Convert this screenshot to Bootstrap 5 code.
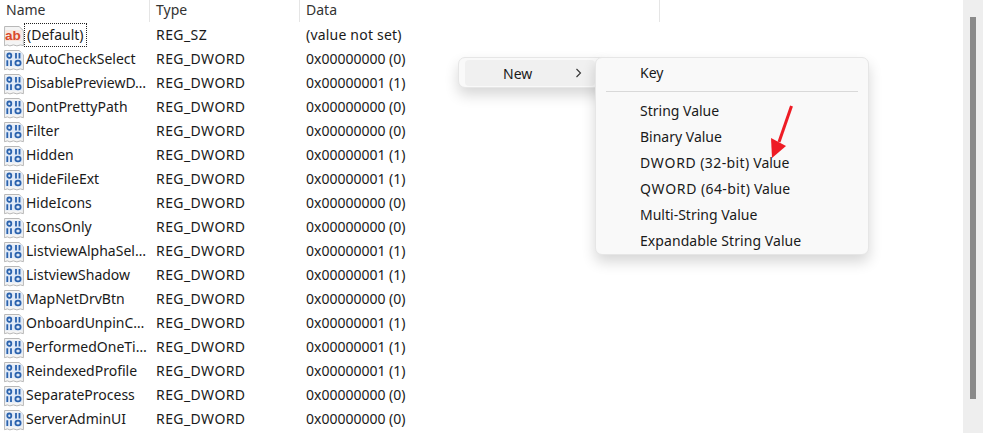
<!DOCTYPE html>
<html lang="en"><head><meta charset="utf-8"><title>Registry</title>
<link href="https://cdn.jsdelivr.net/npm/bootstrap@5.3.0/dist/css/bootstrap.min.css" rel="stylesheet">
<style>
html,body{height:433px;overflow:hidden;background:#fff}
body{font-family:"Noto Sans","Open Sans","Liberation Sans",sans-serif;font-size:14px;color:#1a1a1a;letter-spacing:0}
.stage{position:relative;width:983px;height:433px;overflow:hidden}
.hdr{height:23px;color:#333}
.hc{height:22px;border-right:1px solid #e5e5e5;padding-left:6px;line-height:20px}
.c1{width:150px}.c2{width:150px}.c3{width:360px}
.rw{height:24px;line-height:24px}
.nm{width:150px;padding-left:4px;gap:2px;white-space:nowrap}
.nm svg{flex:none}
.ty{width:150px;padding-left:6px;letter-spacing:.42px}
.da{padding-left:6px}
.spc{letter-spacing:.2px}
.dflt{border:1px dotted #222;line-height:22px;height:24px;padding:0 2px;margin-left:-2px}
.sb{position:absolute;left:963px;top:0;width:20px;height:433px;background:#eee}
.sbt{position:absolute;left:7px;top:17px;width:6px;height:382px;background:#8a8a8a}
.pop{position:absolute;background:#f9f9f9;border:1px solid #e6e6e6;border-radius:7px;box-shadow:0 7px 14px rgba(0,0,0,.16)}
.m1{left:458px;top:57px;width:150px;height:31px;padding:2px 6px}
.m1i{height:26px;width:130px;background:#f0f0f0;border-radius:4px;padding-left:38px;padding-right:12px;line-height:27px}
.m2{left:595px;top:57px;width:274px;height:198px;padding-top:2px}
.mi{height:26px;line-height:26px;padding-left:44px}
.caps{letter-spacing:.75px}
.nums{letter-spacing:.4px}
.wide{letter-spacing:.07px}
.sep{height:1px;background:#d9d9d9;margin:5px 10px 6px}
.arr{position:absolute;left:765px;top:100px}
</style></head><body>
<div class="stage">
<div class="hdr d-flex"><div class="hc c1">Name</div><div class="hc c2">Type</div><div class="hc c3">Data</div></div>
<div id="rows"></div>
<div class="sb"><div class="sbt"></div></div>
<div class="pop m1"><div class="m1i d-flex justify-content-between"><span>New</span><svg width="8" height="26" viewBox="0 0 8 26"><path d="M1.5 9l4 4-4 4" fill="none" stroke="#333" stroke-width="1.1"/></svg></div></div>
<div class="pop m2">
<div class="mi">Key</div><div class="sep"></div>
<div class="mi">String Value</div><div class="mi">Binary Value</div><div class="mi"><span class="caps">DWORD</span> <span class="nums">(32-bit)</span> Value</div><div class="mi"><span class="caps">QWORD</span> <span class="nums">(64-bit)</span> Value</div><div class="mi">Multi-String Value</div><div class="mi wide">Expandable String Value</div>
</div>
<svg class="arr" width="30" height="60" viewBox="0 0 30 60"><path d="M26.5 6L14 42" stroke="#ee1c25" stroke-width="3" fill="none"/><path d="M6 38l15 8-14 12z" fill="#ee1c25"/></svg>
</div>
<script>
var paper='<path d="M.6 3.500h14.500l4.300 4.200v15l-3-.8-3.500 1-3.500-1-3.500 1-2.500-1-3 .8z" fill="#f4f4f4" stroke="#b8b8b8"/>';
var ab='<svg width="20" height="24" viewBox="0 0 20 24">'+paper+'<rect x="1" y="7" width="16.500" height="11" fill="#f8e6de"/><text x="1" y="17" font-family="Liberation Sans" font-weight="700" font-size="13.500" fill="#d9482b">ab</text></svg>';
var bin='<svg width="20" height="24" viewBox="0 0 20 24">'+paper+'<rect x="1" y="5.500" width="17.500" height="14" fill="#dfe9f7"/><g fill="none" stroke="#2a62ad" stroke-width="1.800"><ellipse cx="5.300" cy="8.700" rx="2" ry="2.200"/><path d="M12 6v5.500M15.500 6v5.500M3.300 13.200v5.800M7 13.200v5.800"/><ellipse cx="14" cy="16" rx="2.600" ry="2.400"/></g></svg>';
var d=[["AutoCheckSelect","00000000 (0)"],["DisablePreviewD…","00000001 (1)"],["DontPrettyPath","00000000 (0)"],["Filter","00000000 (0)"],["Hidden","00000001 (1)"],["HideFileExt","00000001 (1)"],["HideIcons","00000000 (0)"],["IconsOnly","00000000 (0)"],["ListviewAlphaSel…","00000001 (1)"],["ListviewShadow","00000001 (1)"],["MapNetDrvBtn","00000000 (0)"],["OnboardUnpinC…","00000001 (1)"],["PerformedOneTi…","00000001 (1)"],["ReindexedProfile","00000001 (1)"],["SeparateProcess","00000000 (0)"],["ServerAdminUI","00000000 (0)"]];
var h='<div class="rw d-flex align-items-center"><div class="nm d-flex align-items-center">'+ab+'<span class="dflt">(Default)</span></div><div class="ty">REG_SZ</div><div class="da spc">(value not set)</div></div>';
d.forEach(function(r){h+='<div class="rw d-flex align-items-center"><div class="nm d-flex align-items-center">'+bin+'<span>'+r[0]+'</span></div><div class="ty">REG_DWORD</div><div class="da">0x'+r[1]+'</div></div>'});
document.getElementById('rows').innerHTML=h;
</script>
<script src="https://cdn.jsdelivr.net/npm/bootstrap@5.3.0/dist/js/bootstrap.bundle.min.js"></script>
</body></html>
